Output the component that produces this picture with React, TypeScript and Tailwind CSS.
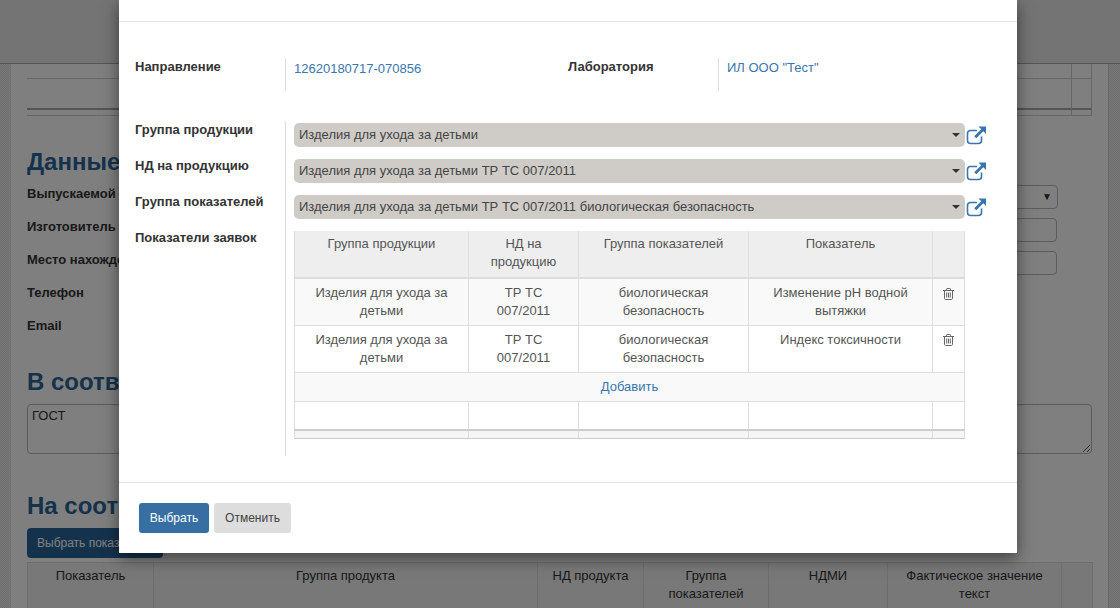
import React from 'react';

const font = "font-['Liberation_Sans',Arial,sans-serif]";

// external link icon next to the selects
const LinkIcon = () => (
  <svg width="21" height="20" viewBox="0 0 21 20" className="ml-[1px] shrink-0 text-[#3a76ad]">
    <path d="M11 5.500H4.500C3 5.500 1.500 6.500 1.500 8.500V15.500C1.500 17.500 3 18.500 4.500 18.500H12.500C14.500 18.500 15.500 17 15.500 15.500V11.500" fill="none" stroke="currentColor" strokeWidth="1.6" />
    <path d="M12.500 1.500H20V9L17.300 6.300L10.300 13.300L8.200 11.200L15.200 4.200Z" fill="currentColor" />
  </svg>
);

const TrashIcon = () => (
  <svg width="11" height="12" viewBox="0 0 11 12" className="inline-block text-[#666]">
    <path d="M0 2.500H11M3.500 2.500V1.200C3.500 .7 3.800 .5 4.200 .5H6.800C7.200 .5 7.500 .7 7.500 1.200V2.500M1.500 2.500V10.300C1.500 11 2 11.500 2.600 11.500H8.400C9 11.500 9.500 11 9.500 10.300V2.500M3.700 4.500V9.500M5.500 4.500V9.500M7.300 4.500V9.500" fill="none" stroke="currentColor" strokeWidth="1" />
  </svg>
);

const selects = [
  'Изделия для ухода за детьми',
  'Изделия для ухода за детьми ТР ТС 007/2011',
  'Изделия для ухода за детьми ТР ТС 007/2011 биологическая безопасность',
];

const rows = [
  { pokazatel: 'Изменение pH водной вытяжки', bg: 'bg-[#f9f9f9]' },
  { pokazatel: 'Индекс токсичности', bg: 'bg-white' },
];

const tdClass = 'border border-[#ddd] px-[8px] pt-[5px] align-top text-center';
const footCell = 'border-x border-t-[2px] border-b border-x-[#ddd] border-t-[#ccc] border-b-[#ccc]';
const heading = 'text-[24px] leading-[26px] font-bold text-[#2b6599]';
const stripe = 'w-[11px] shrink-0 bg-[repeating-conic-gradient(#dcdcdc_0_25%,#f0f0f0_0_50%)] bg-[length:2px_2px]';

const BackgroundPage = () => (
  <div className="flex h-[608px] flex-col overflow-hidden bg-white">
    <div className="h-[64px] shrink-0 bg-[#e8e8e8] border-b border-[#aaa]" />
    <div className="flex flex-1 min-h-0">
      <div className={stripe} />
      <div className="flex-1 min-w-0 px-[16px] text-[#333] border-r border-[#ccc]">
        <div className="grid grid-cols-[1044px_1fr]">
          <div className="h-[15px] border-b border-[#ccc]" />
          <div className="h-[15px] border-b border-x border-[#ccc]" />
          <div className="h-[31px] border-b-[2px] border-[#aaa]" />
          <div className="h-[31px] border-b-[2px] border-x border-b-[#aaa] border-x-[#ccc]" />
          <div className="h-[6px] border-b border-[#ccc]" />
          <div className="h-[6px] border-b border-x border-[#ccc]" />
        </div>
        <h3 className={`mt-[33px] ${heading}`}>Данные</h3>
        <div className="mt-[9px] flex flex-col gap-[13px] text-[13px] font-bold leading-[20px]">
          <div className="flex justify-between h-[20px]">
            <span>Выпускаемой</span>
            <div className="mr-[34px] mt-[1px] h-[24px] w-[60px] border border-[#bbb] rounded pr-[5px] flex items-center justify-end text-[10px] font-normal">▼</div>
          </div>
          <div className="flex justify-between h-[20px]">
            <span>Изготовитель</span>
            <div className="mr-[35px] mt-[1px] h-[24px] w-[60px] border border-[#bbb] rounded" />
          </div>
          <div className="flex justify-between h-[20px]">
            <span className="whitespace-nowrap">Место нахождения</span>
            <div className="mr-[35px] mt-[1px] h-[24px] w-[60px] border border-[#bbb] rounded" />
          </div>
          <div>Телефон</div>
          <div>Email</div>
        </div>
        <h3 className={`mt-[33px] ${heading}`}>В соответствии</h3>
        <textarea
          readOnly
          defaultValue="ГОСТ"
          className="mt-[9px] block h-[50px] w-full border border-[#bbb] rounded px-[4px] pt-[2px] text-[13px] leading-[18px]"
        />
        <h3 className={`mt-[39px] ${heading}`}>На соотв</h3>
        <button className="mt-[9px] block h-[30px] w-[136px] rounded bg-[#2b6599] text-left pl-[10px] text-[12px] text-white whitespace-nowrap">Выбрать показатели</button>
        <table className="mt-[4px] w-[1066px] table-fixed border-collapse text-[13px] leading-[18px] bg-[#f0f0f0]">
          <colgroup>
            <col className="w-[126px]" />
            <col className="w-[384px]" />
            <col className="w-[106px]" />
            <col className="w-[125px]" />
            <col className="w-[119px]" />
            <col className="w-[174px]" />
            <col />
          </colgroup>
          <tbody>
            <tr className="h-[46px]">
              {['Показатель', 'Группа продукта', 'НД продукта', 'Группа показателей', 'НДМИ', 'Фактическое значение текст', ''].map((h, i) => (
                <td key={i} className="border border-[#ddd] px-[4px] pt-[4px] align-top text-center">{h}</td>
              ))}
            </tr>
          </tbody>
        </table>
      </div>
      <div className={stripe} />
    </div>
  </div>
);

export default function App() {
  return (
    <div className={`relative h-[608px] w-[1120px] overflow-hidden ${font}`}>
      <BackgroundPage />

      {/* backdrop + modal */}
      <div className="absolute inset-0 bg-black/50">
        <div className="ml-[119px] w-[898px] h-[553px] bg-white shadow-[0_5px_15px_rgba(0,0,0,0.5)] flex flex-col text-[#333]">
          <div className="h-[22px] shrink-0 border-b border-[#e5e5e5]" />

          <div className="flex-1 px-[16px] pt-[36px]">
            <div className="flex">
              <div className="w-[150px] shrink-0 text-[13px] font-bold leading-[18px]">Направление</div>
              <div className="w-[283px] shrink-0 h-[33px] border-l border-[#ddd] pl-[8px] pt-[2px] text-[13px] leading-[18px] text-[#3a76ad]">12620180717-070856</div>
              <div className="w-[150px] shrink-0 text-[13px] font-bold leading-[18px]">Лаборатория</div>
              <div className="h-[33px] border-l border-[#ddd] pl-[8px] pt-[1px] text-[13px] leading-[18px] text-[#3a76ad]">ИЛ ООО "Тест"</div>
            </div>

            <div className="flex mt-[30px]">
              <div className="w-[150px] shrink-0 flex flex-col gap-[18px] text-[13px] font-bold leading-[18px]">
                <div>Группа продукции</div>
                <div>НД на продукцию</div>
                <div>Группа показателей</div>
                <div>Показатели заявок</div>
              </div>
              <div className="h-[335px] border-l border-[#ddd] pl-[8px] pt-[2px]">
                <div className="flex flex-col gap-[12px]">
                  {selects.map((s) => (
                    <div key={s} className="flex items-center">
                      <div className="w-[671px] h-[24px] rounded-[5px] bg-[#cfccc8] px-[5px] flex items-center justify-between text-[13px] text-[#444]">
                        <span>{s}</span>
                        <span className="w-0 h-0 border-x-[4px] border-x-transparent border-t-[4px] border-t-[#333]" />
                      </div>
                      <LinkIcon />
                    </div>
                  ))}
                </div>

                <table className="mt-[12px] w-[671px] table-fixed border-collapse text-[13px] leading-[18px] text-[#555]">
                  <colgroup>
                    <col className="w-[174px]" />
                    <col className="w-[110px]" />
                    <col className="w-[170px]" />
                    <col className="w-[184px]" />
                    <col />
                  </colgroup>
                  <thead>
                    <tr className="h-[47px] bg-[#eee]">
                      {['Группа продукции', 'НД на продукцию', 'Группа показателей', 'Показатель', ''].map((h, i) => (
                        <th key={i} className="border-x border-b-[2px] border-[#ddd] px-[8px] pt-[4px] align-top text-center font-normal">{h}</th>
                      ))}
                    </tr>
                  </thead>
                  <tbody>
                    {rows.map((r) => (
                      <tr key={r.pokazatel} className={`h-[47px] ${r.bg}`}>
                        <td className={tdClass}>Изделия для ухода за детьми</td>
                        <td className={tdClass}>ТР ТС 007/2011</td>
                        <td className={tdClass}>биологическая безопасность</td>
                        <td className={tdClass}>{r.pokazatel}</td>
                        <td className={tdClass}><TrashIcon /></td>
                      </tr>
                    ))}
                    <tr className="h-[29px] bg-[#f9f9f9]">
                      <td colSpan={5} className="border border-[#ddd] text-center text-[#3a76ad]">Добавить</td>
                    </tr>
                    <tr className="h-[29px] bg-white">
                      <td className="border-x border-[#ddd]" />
                      <td className="border-x border-[#ddd]" />
                      <td className="border-x border-[#ddd]" />
                      <td className="border-x border-[#ddd]" />
                      <td className="border-x border-[#ddd]" />
                    </tr>
                    <tr className="h-[8px] bg-[#f5f5f5]">
                      <td className={footCell} />
                      <td className={footCell} />
                      <td className={footCell} />
                      <td className={footCell} />
                      <td className={footCell} />
                    </tr>
                  </tbody>
                </table>
              </div>
            </div>
          </div>

          <div className="h-[71px] shrink-0 border-t border-[#e5e5e5] pl-[20px] pt-[20px] flex gap-[5px] items-start">
            <button className="h-[30px] w-[70px] rounded-[3px] bg-[#376fa3] text-[12px] text-white">Выбрать</button>
            <button className="h-[30px] w-[77px] rounded-[3px] bg-[#ddd] text-[12px] text-[#444]">Отменить</button>
          </div>
        </div>
      </div>
    </div>
  );
}
